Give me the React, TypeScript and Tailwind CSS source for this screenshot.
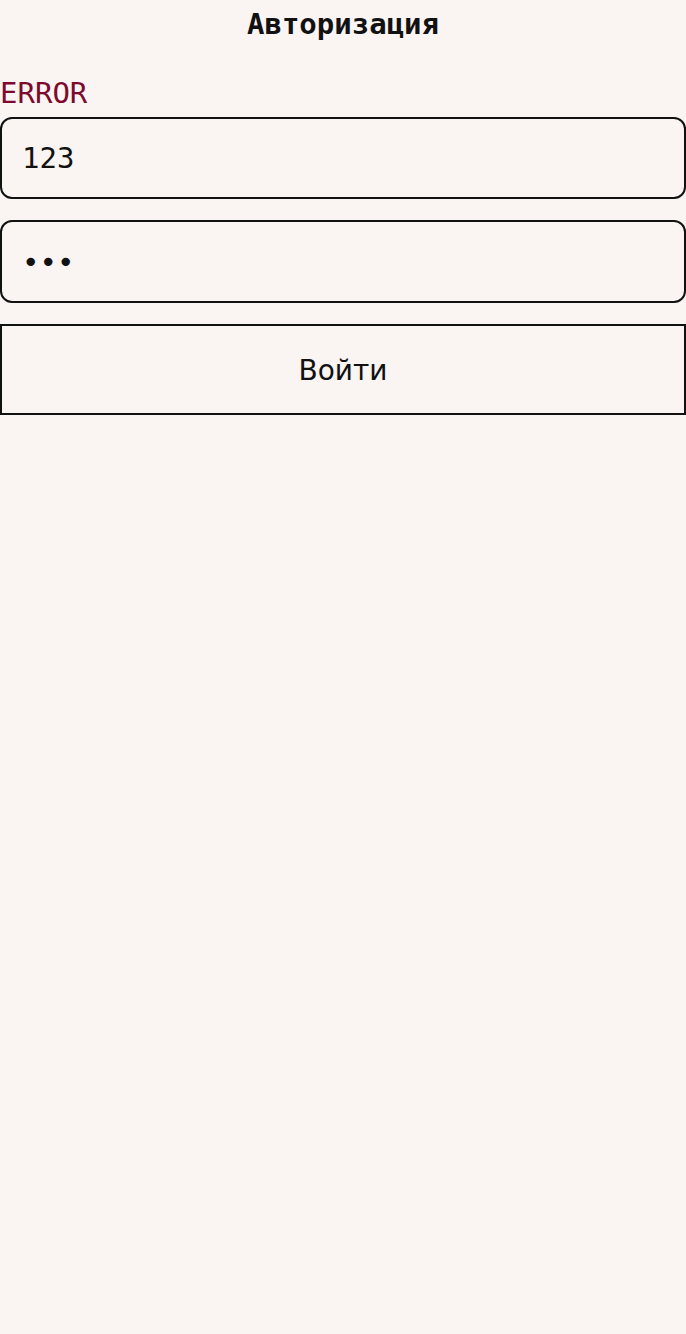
import React from "react";

export default function App() {
  return (
    <div className="min-h-[1334px] w-full bg-[#faf4f3] text-black">
      <h1 className="text-center font-bold text-[29px] leading-[48px] font-['DejaVu_Sans_Mono',monospace] text-[#111]">
        Авторизация
      </h1>
      <div className="mt-[29px] text-[29px] leading-[32px] text-[#7d0a2c] font-['DejaVu_Sans_Mono',monospace]">
        ERROR
      </div>
      <div className="mt-[8px] flex flex-col">
        <input
          readOnly
          type="text"
          value="123"
          className="h-[82px] w-full rounded-[12px] border-2 border-[#111] bg-transparent px-[20px] text-[29px] font-['DejaVu_Sans_Mono',monospace] text-[#111] outline-none"
        />
        <input
          readOnly
          type="password"
          value="123"
          className="mt-[21px] h-[83px] w-full rounded-[12px] border-2 border-[#111] bg-transparent px-[20px] text-[29px] font-['DejaVu_Sans_Mono',monospace] text-[#111] outline-none"
        />
        <button
          type="button"
          className="mt-[21px] h-[91px] w-full border-2 border-[#111] bg-transparent pt-[3px] text-[28px] font-['DejaVu_Sans',sans-serif] text-[#111]"
        >
          Войти
        </button>
      </div>
    </div>
  );
}
